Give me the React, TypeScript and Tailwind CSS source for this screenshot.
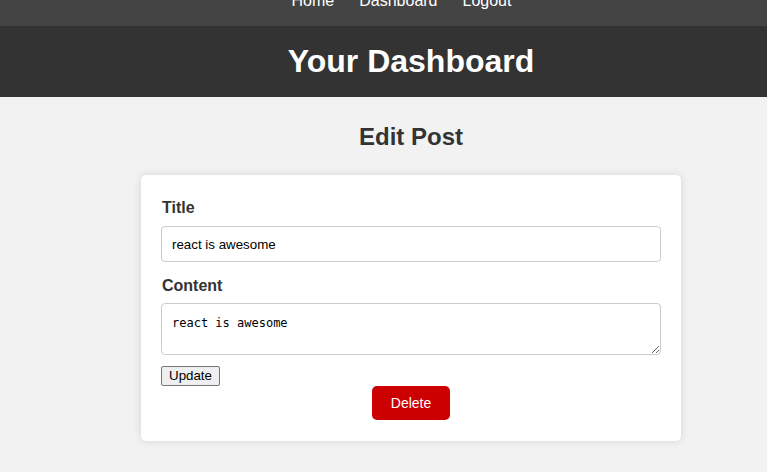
import React from "react";

const NavBar = () => {
  return (
    <nav className="bg-[#444444] h-[26px] overflow-hidden">
      <div className="flex justify-center gap-[25px] pl-[36px] -mt-[8px] text-white text-[16px] leading-[18px]">
        <a href="#">Home</a>
        <a href="#">Dashboard</a>
        <a href="#">Logout</a>
      </div>
    </nav>
  );
};

const EditPost = () => {
  return (
    <div className="flex flex-col items-center pl-[55px]">
      <h2 className="mt-[26px] text-[24px] leading-[28px] font-bold text-[#333333]">Edit Post</h2>
      <div className="mt-[24px] w-[540px] bg-white rounded-[5px] shadow-[0_0_8px_rgba(0,0,0,0.12)] px-[20px] pt-[24px] pb-[21px]">
        <form className="flex flex-col">
          <label className="block text-[16px] leading-[18px] font-bold text-[#333333] pl-[1px]">Title</label>
          <input
            type="text"
            defaultValue="react is awesome"
            className="mt-[9px] h-[36px] w-[500px] border border-[#cccccc] rounded-[4px] px-[10px] text-[13.33px] text-black outline-none"
          />
          <label className="block mt-[15px] text-[16px] leading-[18px] font-bold text-[#333333] pl-[1px]">Content</label>
          <textarea
            defaultValue="react is awesome"
            className="mt-[8px] h-[52px] w-[500px] border border-[#cccccc] rounded-[4px] px-[10px] pt-[12px] text-[12px] leading-[15px] text-black outline-none [font-family:'DejaVu_Sans_Mono',monospace]"
          />
          <div className="flex mt-[11px]">
            <button
              type="button"
              className="h-[20px] px-[7px] bg-[#efefef] border border-[#767676] rounded-[2px] text-[13.33px] leading-[16px] text-black"
            >
              Update
            </button>
          </div>
          <div className="flex justify-center">
            <button
              type="button"
              className="w-[78px] h-[34px] bg-[#cc0000] text-white text-[14px] rounded-[5px]"
            >
              Delete
            </button>
          </div>
        </form>
      </div>
    </div>
  );
};

export default function App() {
  return (
    <div className="min-h-[472px] bg-[#f2f2f2] [font-family:'Liberation_Sans',Arial,sans-serif]">
      <NavBar />
      <header className="bg-[#333333] h-[71px] flex items-center justify-center pl-[55px]">
        <h1 className="text-white text-[32px] font-bold leading-[37px]">Your Dashboard</h1>
      </header>
      <EditPost />
    </div>
  );
}
